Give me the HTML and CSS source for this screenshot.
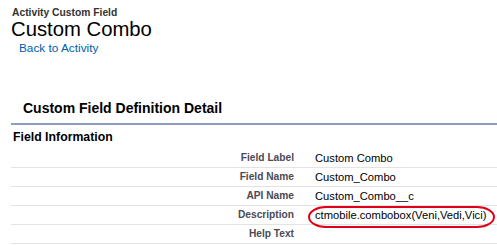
FILE: index.html
```html
<!DOCTYPE html>
<html lang="en">
<head>
  <meta charset="UTF-8">
  <meta name="viewport" content="width=device-width, initial-scale=1.0">
  <title>Custom Combo</title>
  <link rel="stylesheet" href="styles.css">
</head>
<body>
  <div class="page-head">
    <h2 class="page-type">Activity Custom Field</h2>
    <h1 class="page-title">Custom Combo</h1>
    <a class="back-link" href="#">Back to Activity</a>
  </div>

  <div class="detail">
    <h3 class="detail-title">Custom Field Definition Detail</h3>
    <h4 class="section-title">Field Information</h4>

    <div class="field-row">
      <div class="field-label">Field Label</div>
      <div class="field-value">Custom Combo</div>
    </div>
    <div class="field-row">
      <div class="field-label">Field Name</div>
      <div class="field-value">Custom_Combo</div>
    </div>
    <div class="field-row">
      <div class="field-label">API Name</div>
      <div class="field-value">Custom_Combo__c</div>
    </div>
    <div class="field-row">
      <div class="field-label">Description</div>
      <div class="field-value"><span class="circled">ctmobile.combobox(Veni,Vedi,Vici)</span></div>
    </div>
    <div class="field-row">
      <div class="field-label">Help Text</div>
      <div class="field-value"></div>
    </div>
  </div>
</body>
</html>
```

FILE: styles.css
```css
:root {
  --text-main: #000;
  --text-label: #4a4a56;
  --text-head: #333;
  --link: #015ba7;
  --rule-main: #8e9dbe;
  --rule-row: #e3e3e3;
  --mark: #e0001a;
}

* {
  box-sizing: border-box;
}

body {
  margin: 0;
  font-family: "Liberation Sans", Arial, sans-serif;
  color: var(--text-main);
  background-color: #fff;
}

.page-head {
  padding: 7px 0 0 11px;
}

.page-type {
  margin: 0 0 0 1px;
  font-size: 10.3px;
  line-height: 12px;
  font-weight: bold;
  color: var(--text-head);
}

.page-title {
  margin: 0;
  font-size: 20.3px;
  line-height: 20px;
  font-weight: normal;
}

.back-link {
  display: block;
  margin: 2px 0 0 8px;
  font-size: 11.8px;
  line-height: 14px;
  color: var(--link);
  text-decoration: none;
}

.detail {
  margin: 44px 0 0 11px;
}

.detail-title {
  margin: 0;
  padding: 0 0 6px 12px;
  font-size: 14px;
  line-height: 18px;
  font-weight: bold;
  border-bottom: 2px solid var(--rule-main);
}

.section-title {
  margin: 5px 0 4px 0;
  padding-left: 2px;
  font-size: 12.3px;
  line-height: 15px;
  font-weight: bold;
}

.field-row {
  display: flex;
  align-items: center;
  height: 19px;
  border-bottom: 1px solid var(--rule-row);
}

.field-label {
  width: 283px;
  text-align: right;
  font-size: 10.2px;
  line-height: 18px;
  font-weight: bold;
  color: var(--text-label);
}

.field-value {
  flex: 1;
  padding-left: 21px;
  font-size: 11.2px;
  line-height: 18px;
}

.circled {
  position: relative;
  display: inline-block;
  vertical-align: top;
  line-height: 18px;
}

.circled::after {
  content: "";
  position: absolute;
  left: -7px;
  top: 0;
  width: 183px;
  height: 18px;
  border: 2px solid var(--mark);
  border-radius: 18px / 50%;
}
```
